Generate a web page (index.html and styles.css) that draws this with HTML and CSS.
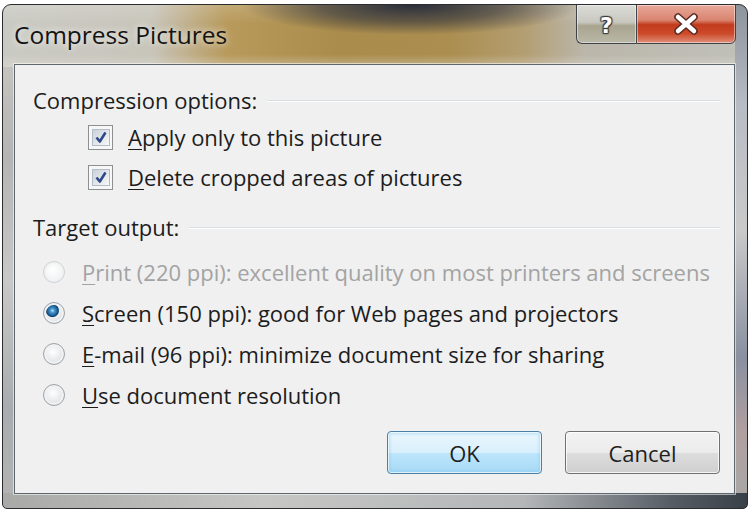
FILE: index.html
```html
<!DOCTYPE html>
<html lang="en">
<head>
<meta charset="utf-8">
<title>Compress Pictures</title>
<link rel="stylesheet" href="styles.css">
</head>
<body>
<div class="window">
  <div class="titlebar">
    <div class="title">Compress Pictures</div>
    <div class="caption-buttons">
      <div class="cap-btn help"><span class="help-glyph">?</span></div>
      <div class="cap-btn close">
        <svg width="26" height="22" viewBox="0 0 26 22">
          <path d="M5 4 L21 18 M21 4 L5 18" stroke="#5a2a22" stroke-width="7.5" stroke-linecap="round" fill="none"/>
          <path d="M5 4 L21 18 M21 4 L5 18" stroke="#ffffff" stroke-width="4.5" stroke-linecap="round" fill="none"/>
        </svg>
      </div>
    </div>
  </div>
  <div class="client">
    <div class="group-header"><span>Compression options:</span><span class="rule"></span></div>
    <div class="check-row first">
      <span class="cb"><span class="cb-in"><svg viewBox="0 0 16 16" width="16" height="16"><path d="M3.5 8.5 L6.8 12.5 L12.5 3.5" stroke="#2f4a8a" stroke-width="2.6" fill="none" stroke-linejoin="round"/></svg></span></span>
      <span class="label"><u>A</u>pply only to this picture</span>
    </div>
    <div class="check-row">
      <span class="cb"><span class="cb-in"><svg viewBox="0 0 16 16" width="16" height="16"><path d="M3.5 8.5 L6.8 12.5 L12.5 3.5" stroke="#2f4a8a" stroke-width="2.6" fill="none" stroke-linejoin="round"/></svg></span></span>
      <span class="label"><u>D</u>elete cropped areas of pictures</span>
    </div>
    <div class="group-header second"><span>Target output:</span><span class="rule"></span></div>
    <div class="radio-row first disabled">
      <span class="rd"></span>
      <span class="label"><u>P</u>rint (220 ppi): excellent quality on most printers and screens</span>
    </div>
    <div class="radio-row">
      <span class="rd checked"></span>
      <span class="label"><u>S</u>creen (150 ppi): good for Web pages and projectors</span>
    </div>
    <div class="radio-row">
      <span class="rd"></span>
      <span class="label"><u>E</u>-mail (96 ppi): minimize document size for sharing</span>
    </div>
    <div class="radio-row">
      <span class="rd"></span>
      <span class="label"><u>U</u>se document resolution</span>
    </div>
    <div class="button-row">
      <div class="btn default">OK</div>
      <div class="btn">Cancel</div>
    </div>
  </div>
</div>
</body>
</html>
```

FILE: styles.css
```css
* { box-sizing: border-box; }

html, body {
  margin: 0;
  padding: 0;
  background: #ffffff;
}

body {
  width: 754px;
  height: 513px;
  overflow: hidden;
  font-family: "Open Sans", "Noto Sans", "DejaVu Sans", sans-serif;
  color: #1c1c1c;
}

.window {
  margin: 4px 6px 0 2px;
  height: 505px;
  border: 1px solid #2a2c30;
  border-radius: 9px 9px 5px 5px;
  display: flex;
  flex-direction: column;
  background:
    linear-gradient(to right, #a9a9a7 0%, #c6c6c4 35%, #b4b6b8 70%, #555c64 90%, #3a4048 100%) bottom / 100% 15px no-repeat,
    linear-gradient(to bottom, #8e949c 0%, #b8bcc4 20%, #c9c9c9 45%, #8a90a0 70%, #b0a0a0 85%, #a8a8a8 100%) right / 12px 100% no-repeat,
    radial-gradient(ellipse 170px 30px at 55% 0%, rgba(34, 40, 56, 0.95), rgba(34, 40, 56, 0.55) 55%, rgba(34, 40, 56, 0) 100%) top / 100% 62px no-repeat,
    linear-gradient(to bottom, rgba(255, 255, 255, 0.15), rgba(255, 255, 255, 0) 30%, rgba(255, 255, 255, 0) 80%, rgba(225, 222, 212, 0.45) 100%) top / 100% 62px no-repeat,
    linear-gradient(to right, #cacac4 0%, #c8c5ba 20%, #b89a5c 30%, #aa8c4c 45%, #ab8e50 60%, #b39e72 70%, #bbb6aa 78%, #c0c0ba 100%) top / 100% 62px no-repeat,
    linear-gradient(to bottom, #cfcdc6 0%, #b4b4b4 30%, #c8c8c8 55%, #a9abae 80%, #b4b4b4 100%);
  overflow: hidden;
}

.titlebar {
  height: 59px;
  flex: none;
  display: flex;
  justify-content: space-between;
  align-items: flex-start;
}

.title {
  padding: 13px 0 0 11px;
  font-size: 24.5px;
  color: #141414;
  text-shadow: 0 0 6px rgba(255, 255, 255, 0.7), 0 0 12px rgba(255, 255, 255, 0.4);
}

.caption-buttons {
  display: flex;
  margin: -1px 11px 0 0;
}

.cap-btn {
  height: 40px;
  border: 1px solid #40444a;
  display: flex;
  align-items: center;
  justify-content: center;
  box-shadow: inset 0 0 0 1px rgba(255, 255, 255, 0.45);
}

.help {
  width: 60px;
  border-radius: 0 0 0 6px;
  border-right: none;
  background: linear-gradient(to bottom, #dcdcd8 0%, #c8c8c0 45%, #a8a48e 55%, #bab8a8 100%);
}

.help-glyph {
  font-family: "DejaVu Sans", sans-serif;
  font-weight: bold;
  font-size: 22px;
  color: #ffffff;
  margin-top: 2px;
  text-shadow: 0 0 1px #3a3a3a, 1px 1px 1px #3a3a3a, -1px -1px 1px #3a3a3a, 1px -1px 1px #3a3a3a, -1px 1px 1px #3a3a3a;
}

.close {
  width: 100px;
  border-radius: 0 0 6px 0;
  background: linear-gradient(to bottom, #e8a898 0%, #d98470 40%, #c23a1c 52%, #cc4a2a 75%, #e0907a 100%);
}

.client {
  flex: 1;
  margin: 0 12px 14px 11px;
  border: 1px solid #5e666e;
  box-shadow: 0 0 0 1px rgba(255, 255, 255, 0.55);
  background: #f0f0f0;
  padding: 21px 14px 18px 18px;
  display: flex;
  flex-direction: column;
  font-size: 22px;
}

.group-header {
  height: 28px;
  display: flex;
  align-items: center;
  gap: 10px;
}

.group-header.second {
  margin-top: 16px;
}

.rule {
  flex: 1;
  height: 1px;
  background: #d9dee3;
  box-shadow: 0 1px 0 #ffffff;
}

.check-row {
  height: 40px;
  display: flex;
  align-items: center;
  gap: 15px;
  margin-left: 55px;
}

.check-row.first {
  margin-top: 3px;
}

.cb {
  width: 25px;
  height: 25px;
  border: 1px solid #8e8f91;
  background: #f7f7f7;
  padding: 3px;
  display: flex;
}

.cb-in {
  flex: 1;
  border: 1px solid #b4bcc6;
  background: linear-gradient(135deg, #c9d1da 0%, #e4e8ec 55%, #f6f7f8 100%);
  display: flex;
  align-items: center;
  justify-content: center;
}

.radio-row {
  height: 41px;
  display: flex;
  align-items: center;
  gap: 17px;
  margin-left: 10px;
}

.radio-row.first {
  margin-top: 10px;
}

.radio-row.disabled {
  color: #a3a3a3;
}

.rd {
  width: 22px;
  height: 22px;
  border-radius: 50%;
  border: 1px solid #9ca4ab;
  background: radial-gradient(circle at 45% 40%, #ffffff 0%, #e6e8ea 55%, #c9ced3 100%);
  box-shadow: inset 0 0 0 2px #f2f2f2;
  flex: none;
}

.rd.checked {
  background:
    radial-gradient(circle at 42% 38%, #bfe4f8 0px, #4c9ad0 2px, #1a5e98 5px, #0e3f6e 6px, rgba(14, 63, 110, 0) 7px),
    radial-gradient(circle at 45% 40%, #ffffff 0%, #e6e8ea 55%, #c9ced3 100%);
}

.disabled .rd {
  border-color: #cdd2d6;
  background: radial-gradient(circle at 45% 40%, #ffffff 0%, #f2f3f4 60%, #e2e5e7 100%);
}

u {
  text-decoration-thickness: 1px;
  text-underline-offset: 3px;
}

.button-row {
  margin-top: 16px;
  display: flex;
  justify-content: flex-end;
  gap: 23px;
}

.btn {
  width: 155px;
  height: 43px;
  border: 1px solid #707070;
  border-radius: 4px;
  display: flex;
  align-items: center;
  justify-content: center;
  font-size: 22px;
  color: #1e1e1e;
  background: linear-gradient(to bottom, #f3f3f3 0%, #ebebeb 50%, #dddddd 51%, #cfcfcf 100%);
  box-shadow: inset 0 0 0 1px rgba(255, 255, 255, 0.8);
}

.btn.default {
  border-color: #4c7fa6;
  background: linear-gradient(to bottom, #eaf6fd 0%, #d9f0fc 50%, #bee6fd 51%, #a7d9f5 100%);
  box-shadow: inset 0 0 0 1px rgba(255, 255, 255, 0.7), inset 0 0 3px 2px rgba(120, 200, 240, 0.45);
}
```
